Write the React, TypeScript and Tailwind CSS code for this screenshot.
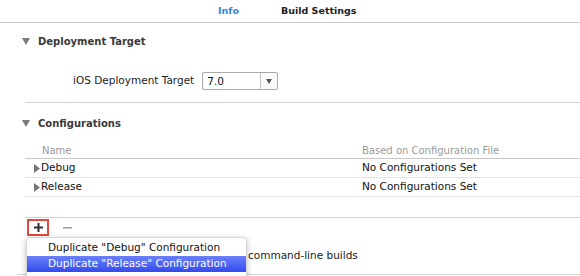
const DownTri = () => (
  <svg width="8" height="7" viewBox="0 0 8 7" className="shrink-0">
    <polygon points="0,0 8,0 4,7" fill="#7b7b7b" />
  </svg>
);

const RightTri = () => (
  <svg width="6" height="9" viewBox="0 0 6 9" className="shrink-0">
    <polygon points="0,0 6,4.5 0,9" fill="#777777" />
  </svg>
);

const rows = ["Debug", "Release"];

const App = () => {
  return (
    <div
      className="relative w-[580px] h-[276px] overflow-hidden bg-white text-[#111]"
      style={{ fontFamily: '"DejaVu Sans", "Liberation Sans", sans-serif' }}
    >
      {/* Tabs */}
      <div className="h-[23px] flex items-center pl-[218px] gap-[42px] border-b border-[#c9c9c9] text-[9.5px] font-bold">
        <span className="text-[#2f86e3]">Info</span>
        <span className="text-[#222]">Build Settings</span>
      </div>

      {/* Deployment Target */}
      <div className="mt-[10px] h-[16px] flex items-center pl-[22px] gap-[8px]">
        <DownTri />
        <span className="text-[10px] font-bold text-[#3a3a3a]">Deployment Target</span>
      </div>
      <div className="mt-[23px] h-[18px] flex items-center pl-[73px] gap-[8px]">
        <span className="text-[10.5px] text-[#222]">iOS Deployment Target</span>
        <div className="w-[76px] h-[18px] flex border border-[#a9a9a9] rounded-[2px] bg-white">
          <span className="flex-1 pl-[4px] text-[10.5px] leading-[16px] text-[#111]">7.0</span>
          <div className="w-[17px] border-l border-[#c4c4c4] flex items-center justify-center bg-[#fafafa]">
            <svg width="6" height="5" viewBox="0 0 6 5">
              <polygon points="0,0 6,0 3,5" fill="#555" />
            </svg>
          </div>
        </div>
      </div>
      <div className="mt-[12px] ml-[25px] h-px bg-[#d2d2d2]" />

      {/* Configurations */}
      <div className="mt-[12px] h-[16px] flex items-center pl-[22px] gap-[8px]">
        <DownTri />
        <span className="text-[10px] font-bold text-[#3a3a3a]">Configurations</span>
      </div>
      <div className="ml-[25px] mt-[12px]">
        <div className="h-[16px] flex items-center border-b border-[#c6c6c6] text-[10px] text-[#9a9a9a]">
          <span className="w-[337px] pl-[17px]">Name</span>
          <span>Based on Configuration File</span>
        </div>
        {rows.map((r) => (
          <div key={r} className="h-[19px] flex items-center border-b border-[#e3e3e3] text-[10.5px]">
            <div className="w-[337px] flex items-center gap-[1px] pl-[9px]">
              <RightTri />
              <span>{r}</span>
            </div>
            <span>No Configurations Set</span>
          </div>
        ))}
      </div>
      <div className="mt-[20px] ml-[25px] h-px bg-[#d2d2d2]" />

      {/* + / - toolbar */}
      <div className="mt-px h-[17px] flex items-center pl-[27px] gap-[14px]">
        <div className="w-[22px] h-[17px] border-2 border-[#e5473b] flex items-center justify-center">
          <svg width="9" height="9" viewBox="0 0 9 9">
            <rect x="3.5" y="0" width="2" height="9" fill="#333" />
            <rect x="0" y="3.5" width="9" height="2" fill="#333" />
          </svg>
        </div>
        <svg width="9" height="2" viewBox="0 0 9 2">
          <rect x="0" y="0" width="9" height="1.5" fill="#9a9a9a" />
        </svg>
      </div>

      {/* command-line builds row (its start lies under the menu) */}
      <div className="mt-[11px] h-[18px] flex items-center pl-[248px] text-[10.5px]">
        <span className="text-[#222]">command-line builds</span>
      </div>
      <div className="mt-[9px] ml-[17px] h-px bg-[#d2d2d2]" />

      {/* Popup menu */}
      <div className="absolute left-[26px] top-[237px] w-[221px] pt-[2px] pb-[6px] bg-white rounded-[4px] border border-[#d6d6d6] shadow-[0_2px_6px_rgba(0,0,0,0.25)] text-[10.5px]">
        <div className="h-[16px] flex items-center pl-[21px] text-[#111]">
          Duplicate "Debug" Configuration
        </div>
        <div className="h-[16px] flex items-center pl-[21px] text-white bg-gradient-to-b from-[#6b7ff7] to-[#3549ef]">
          Duplicate "Release" Configuration
        </div>
      </div>
    </div>
  );
};

export default App;
